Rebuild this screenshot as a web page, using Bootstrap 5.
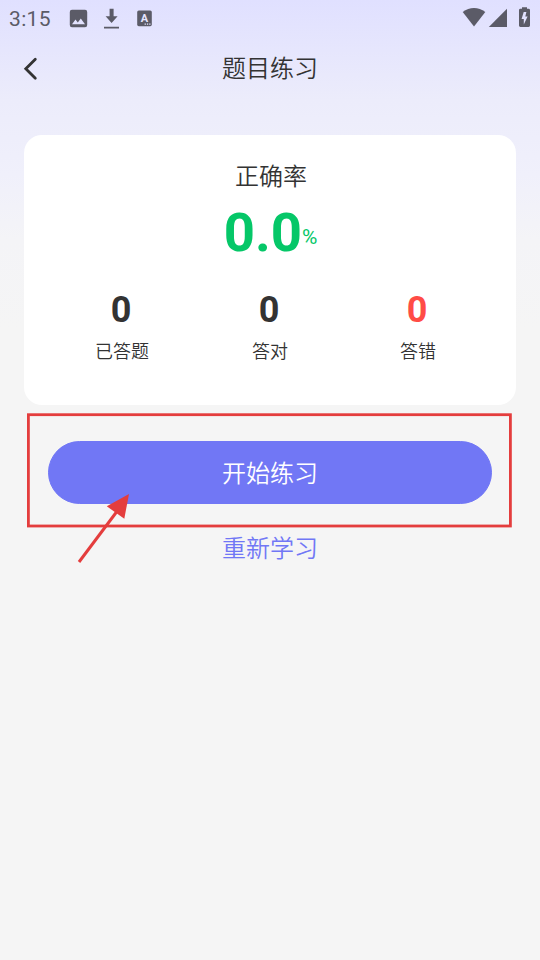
<!DOCTYPE html>
<html lang="zh-CN">
<head>
<meta charset="utf-8">
<meta name="viewport" content="width=device-width, initial-scale=1">
<title>题目练习</title>
<link href="https://cdn.jsdelivr.net/npm/bootstrap@5.3.0/dist/css/bootstrap.min.css" rel="stylesheet">
<style>
body{font-family:Roboto,"Noto Sans CJK SC",sans-serif;color:#333;background:#f5f5f5;line-height:1}
.screen{height:960px;background:linear-gradient(180deg,#e0e0ff 0,#ececfb 100px,#f0f0fb 175px,#f4f4f7 240px,#f5f5f5 330px)}
.status{height:37px;color:#5b5b67;padding-left:9px}
.clock{font-size:21px;letter-spacing:.35px;width:59px;padding-top:2px;font-weight:450}
.status svg,.title-bar svg,.notes svg{display:block}
.title-bar{height:62px}
.title-bar h1,.cjk-lg{font-family:"Noto Sans CJK SC DemiLight","Noto Sans CJK SC",sans-serif;font-size:24px;line-height:36px;font-weight:350}
.title-bar h1{padding-bottom:3px}
.back{width:60px;height:62px}
.score{margin:36px 24px 0;height:270px;border-radius:18px;padding:22px 24px 0}
.rate-label{padding-left:2px}
.rate{color:#05c768;height:78px;padding:2px 0 0 1px}
.rate strong{font-size:54.500px;line-height:74px;font-weight:700}
.rate span{font-size:21px;line-height:21px;align-self:flex-end;margin-bottom:23px}
.stat strong{font-size:36px;line-height:42px;font-weight:700;padding-right:2px}
.stat span{font-family:"Noto Sans CJK SC DemiLight","Noto Sans CJK SC",sans-serif;font-size:18px;line-height:27px;font-weight:350;padding-top:6px}
.counts{padding-top:18px}
.wrong{color:#ff4c46}
.start{margin-top:36px;height:63px;--bs-btn-bg:#7177f5;--bs-btn-border-color:#7177f5;--bs-btn-color:#fff;--bs-btn-hover-bg:#656bea;--bs-btn-hover-color:#fff;--bs-btn-padding-y:0}
.start.btn{padding-bottom:1px}
.again{color:#7177f5;margin-top:25px}
.notes{pointer-events:none}
</style>
</head>
<body>
<div class="screen position-relative overflow-hidden">
  <header class="status d-flex">
    <div class="clock d-flex align-items-center">3:15</div>
    <svg width="100" height="37" viewBox="68 0 100 37" fill="currentColor">
      <path fill-rule="evenodd" d="M72 9.8h13q2.2 0 2.2 2.2v13q0 2.2-2.2 2.2H72q-2.2 0-2.2-2.2V12q0-2.2 2.2-2.2zM72 24.2h13l-4.200-5.800-3 4-2.300-2.800z"/>
      <path d="M109.600 8.800h4v7.400h4L111.600 23l-6-6.800h4zM104 26.800h15v1.800h-15z"/>
      <rect x="137.200" y="10.400" width="14.600" height="15.800" rx="1.600"/>
      <text x="144.500" y="22" text-anchor="middle" font-size="11" font-weight="700" fill="#e5e5ff">A</text>
      <path fill="#e5e5ff" d="M144.600 23.500h1.300v1.300h-1.300zM146.900 23.500h1.300v1.300h-1.300zM149.200 23.500h1.300v1.300h-1.300z"/>
    </svg>
    <svg class="ms-auto" width="80" height="37" viewBox="460 0 80 37" fill="currentColor">
      <path d="M462.700 12.100Q468 8.100 474 8.100t11.300 4L474 26.600z"/>
      <path d="M507 8.800V27h-18.200z"/>
      <path fill-rule="evenodd" d="M522 7.200h5v1.600h1.600q1.400 0 1.400 1.400v15.400q0 1.400-1.400 1.400h-8.200q-1.400 0-1.400-1.400V10.200q0-1.400 1.400-1.400h1.600zM523.700 12l-2.100 7.100h2.200v5.500l3.800-8h-2.300l1.100-4.600z"/>
    </svg>
  </header>
  <nav class="title-bar d-flex align-items-center">
    <a class="back" href="#" aria-label="返回"><svg width="60" height="62" viewBox="0 37 60 62" fill="none" stroke="#333" stroke-width="2.800"><path d="M35.300 59.200L25.800 68.700l9.500 9.500" stroke-linecap="round"/></svg></a>
    <h1 class="flex-grow-1 text-center m-0">题目练习</h1>
    <div class="back"></div>
  </nav>
  <main>
    <section class="score bg-white text-center">
      <div class="cjk-lg rate-label">正确率</div>
      <div class="rate d-flex justify-content-center align-items-start"><strong>0.0</strong><span>%</span></div>
      <div class="counts row g-0">
        <div class="stat col d-flex flex-column"><strong>0</strong><span>已答题</span></div>
        <div class="stat col d-flex flex-column"><strong>0</strong><span>答对</span></div>
        <div class="stat col d-flex flex-column"><strong class="wrong">0</strong><span>答错</span></div>
      </div>
    </section>
    <div class="d-grid px-5">
      <button class="start btn rounded-pill cjk-lg" type="button">开始练习</button>
      <a class="again cjk-lg text-center text-decoration-none" href="#">重新学习</a>
    </div>
  </main>
  <div class="notes position-absolute top-0 start-0">
    <svg width="540" height="960" fill="none" stroke="#e43d3d" stroke-width="3">
      <rect x="28.400" y="414.700" width="482" height="111.300" stroke-width="2.800"/>
      <path d="M79 562l39-52"/>
      <path d="M129 494l-22.200 12.300 17.500 12.500z" fill="#e43d3d" stroke="none"/>
    </svg>
  </div>
</div>
<script src="https://cdn.jsdelivr.net/npm/bootstrap@5.3.0/dist/js/bootstrap.bundle.min.js"></script>
</body>
</html>
